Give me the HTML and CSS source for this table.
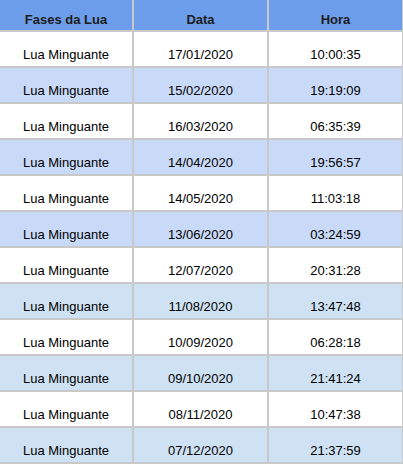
FILE: index.html
```html
<!DOCTYPE html>
<html lang="pt">
<head>
<meta charset="utf-8">
<title>Fases da Lua</title>
<link rel="stylesheet" href="styles.css">
</head>
<body>
<div class="sheet">
  <div class="cell head">Fases da Lua</div>
  <div class="cell head">Data</div>
  <div class="cell head">Hora</div>

  <div class="cell">Lua Minguante</div><div class="cell">17/01/2020</div><div class="cell">10:00:35</div>
  <div class="cell alt-a">Lua Minguante</div><div class="cell alt-a">15/02/2020</div><div class="cell alt-a">19:19:09</div>
  <div class="cell">Lua Minguante</div><div class="cell">16/03/2020</div><div class="cell">06:35:39</div>
  <div class="cell alt-a">Lua Minguante</div><div class="cell alt-a">14/04/2020</div><div class="cell alt-a">19:56:57</div>
  <div class="cell">Lua Minguante</div><div class="cell">14/05/2020</div><div class="cell">11:03:18</div>
  <div class="cell alt-a">Lua Minguante</div><div class="cell alt-a">13/06/2020</div><div class="cell alt-a">03:24:59</div>
  <div class="cell">Lua Minguante</div><div class="cell">12/07/2020</div><div class="cell">20:31:28</div>
  <div class="cell alt-b">Lua Minguante</div><div class="cell alt-b">11/08/2020</div><div class="cell alt-b">13:47:48</div>
  <div class="cell">Lua Minguante</div><div class="cell">10/09/2020</div><div class="cell">06:28:18</div>
  <div class="cell alt-b">Lua Minguante</div><div class="cell alt-b">09/10/2020</div><div class="cell alt-b">21:41:24</div>
  <div class="cell">Lua Minguante</div><div class="cell">08/11/2020</div><div class="cell">10:47:38</div>
  <div class="cell alt-b">Lua Minguante</div><div class="cell alt-b">07/12/2020</div><div class="cell alt-b">21:37:59</div>
</div>
</body>
</html>
```

FILE: styles.css
```css
html, body {
  margin: 0;
  padding: 0;
  background: #ffffff;
}

.sheet {
  display: grid;
  grid-template-columns: 132px 133px 133px;
  grid-template-rows: 30px repeat(12, 34px);
  gap: 2px;
  width: 402px;
  padding-right: 1px;
  padding-bottom: 2px;
  background: #c9c9c9;
  font-family: "Liberation Sans", Arial, sans-serif;
  font-size: 13px;
  line-height: 16px;
  color: #000000;
}

.cell {
  display: flex;
  align-items: flex-end;
  justify-content: center;
  padding-bottom: 3px;
  background: #ffffff;
  white-space: nowrap;
}

.head {
  background: #6d9eeb;
  font-weight: bold;
  color: #1c1c1c;
  padding-bottom: 2px;
}

.alt-a {
  background: #c9daf8;
}

.alt-b {
  background: #cfe2f3;
}
```
